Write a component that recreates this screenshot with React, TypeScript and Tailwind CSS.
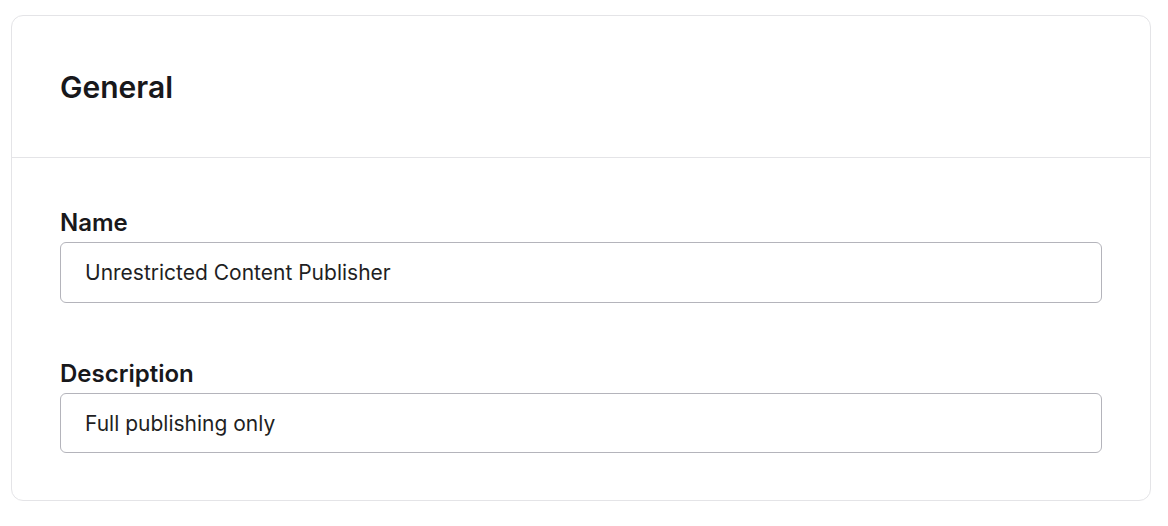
export default function App() {
  return (
    <div className="min-h-screen bg-white pl-[11px] pt-[15px] font-['Inter',sans-serif] text-[#18181b]">
      <div className="w-[1140px] rounded-xl border border-[#e4e4e7] bg-white">
        {/* Header */}
        <div className="flex h-[142px] items-center border-b border-[#e4e4e7] px-12">
          <h2 className="text-[30px] font-semibold leading-9">General</h2>
        </div>

        {/* Body */}
        <div className="flex flex-col gap-[56px] px-12 pt-[50px] pb-[47px]">
          <div className="flex flex-col gap-1">
            <label className="text-[24px] font-semibold leading-[30px]">Name</label>
            <input
              readOnly
              value="Unrestricted Content Publisher"
              className="h-[61px] w-full rounded-md border border-[#b4b4bb] bg-white px-6 text-[21px] text-[#1f1f23] outline-none"
            />
          </div>
          <div className="flex flex-col gap-1">
            <label className="text-[24px] font-semibold leading-[30px]">Description</label>
            <input
              readOnly
              value="Full publishing only"
              className="h-[60px] w-full rounded-md border border-[#b4b4bb] bg-white px-6 text-[21px] text-[#1f1f23] outline-none"
            />
          </div>
        </div>
      </div>
    </div>
  );
}
